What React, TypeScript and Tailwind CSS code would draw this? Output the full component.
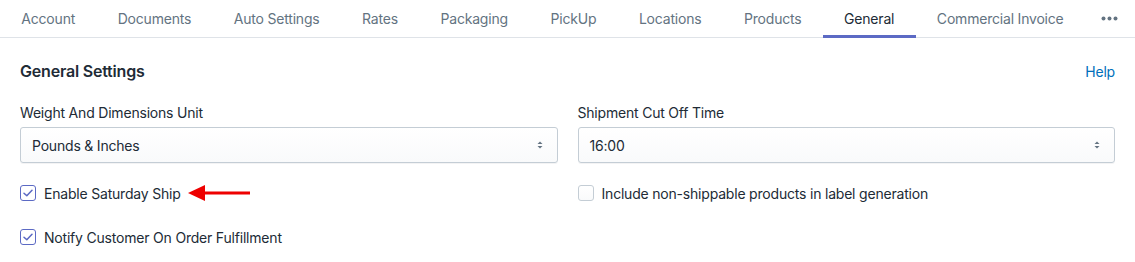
import { useState } from 'react';

const TABS = [
  'Account',
  'Documents',
  'Auto Settings',
  'Rates',
  'Packaging',
  'PickUp',
  'Locations',
  'Products',
  'General',
  'Commercial Invoice',
];

function SelectArrows() {
  return (
    <svg width="8" height="12" viewBox="0 0 8 12" className="shrink-0">
      <path d="M4 2.5 L6.5 5 H1.5 Z" fill="#637381" />
      <path d="M4 9.5 L6.5 7 H1.5 Z" fill="#637381" />
    </svg>
  );
}

function Select({ value }: { value: string }) {
  return (
    <div className="flex h-9 items-center justify-between rounded-[3px] border border-[#c4cdd5] bg-gradient-to-b from-white to-[#f9fafb] pl-[11px] pr-[13px] text-[14px] text-[#212b36] shadow-[0_1px_0_0_rgba(22,29,37,0.05)]">
      <span>{value}</span>
      <SelectArrows />
    </div>
  );
}

function Checkbox({ checked }: { checked: boolean }) {
  return (
    <span
      className={
        checked
          ? 'flex h-4 w-4 shrink-0 items-center justify-center rounded-[3px] border border-[#5c6ac4] bg-white'
          : 'flex h-4 w-4 shrink-0 items-center justify-center rounded-[3px] border border-[#c4cdd5] bg-gradient-to-b from-white to-[#f9fafb]'
      }
    >
      {checked && (
        <svg width="10" height="8" viewBox="0 0 10 8">
          <path d="M1 4.2 L3.8 6.8 L9 1.2" fill="none" stroke="#5c6ac4" strokeWidth="1.5" strokeLinecap="round" strokeLinejoin="round" />
        </svg>
      )}
    </span>
  );
}

function CheckRow({ checked, label, children }: { checked: boolean; label: string; children?: React.ReactNode }) {
  return (
    <label className="flex h-5 items-center gap-2 whitespace-nowrap text-[14px] text-[#212b36]">
      <Checkbox checked={checked} />
      <span>{label}</span>
      {children}
    </label>
  );
}

function RedArrow() {
  return (
    <svg width="62" height="18" viewBox="0 0 62 18" className="ml-[-1px]">
      <path d="M0 9 L17 1 L17 17 Z" fill="#ee0000" />
      <rect x="15" y="7.5" width="47" height="3" fill="#ee0000" />
    </svg>
  );
}

export default function App() {
  const [active] = useState('General');

  return (
    <div className="w-[1135px] bg-white font-['Inter','Liberation_Sans',sans-serif] tracking-[-0.2px] antialiased">
      <nav className="flex h-[38px] items-center border-b border-[#dfe3e8]">
        {TABS.map((tab) => (
          <div
            key={tab}
            className={
              tab === active
                ? 'relative flex h-full items-center whitespace-nowrap px-[21.3px] text-[14px] text-[#212b36]'
                : 'relative flex h-full items-center whitespace-nowrap px-[21.3px] text-[14px] text-[#637381]'
            }
          >
            {tab}
            {tab === active && <span className="absolute bottom-[-1px] left-0 right-0 h-[3px] bg-[#5c6ac4]" />}
          </div>
        ))}
        <div className="ml-auto flex h-full items-center pr-[17px]">
          <svg width="17" height="5" viewBox="0 0 17 5">
            <circle cx="2.5" cy="2.5" r="2" fill="#637381" />
            <circle cx="8.5" cy="2.5" r="2" fill="#637381" />
            <circle cx="14.5" cy="2.5" r="2" fill="#637381" />
          </svg>
        </div>
      </nav>

      <section className="px-5 pb-4 pt-[21px]">
        <div className="mb-5 flex h-6 items-center justify-between">
          <h2 className="text-[16px] font-semibold text-[#212b36]">General Settings</h2>
          <a className="text-[14px] text-[#006fbb]">Help</a>
        </div>

        <div className="grid grid-cols-2 gap-x-5">
          <div>
            <div className="mb-1 h-5 text-[14px] leading-5 text-[#212b36]">Weight And Dimensions Unit</div>
            <Select value="Pounds & Inches" />
          </div>
          <div>
            <div className="mb-1 h-5 text-[14px] leading-5 text-[#212b36]">Shipment Cut Off Time</div>
            <Select value="16:00" />
          </div>

          <div className="mt-5">
            <CheckRow checked label="Enable Saturday Ship">
              <RedArrow />
            </CheckRow>
          </div>
          <div className="mt-5">
            <CheckRow checked={false} label="Include non-shippable products in label generation" />
          </div>

          <div className="mt-6">
            <CheckRow checked label="Notify Customer On Order Fulfillment" />
          </div>
        </div>
      </section>
    </div>
  );
}
